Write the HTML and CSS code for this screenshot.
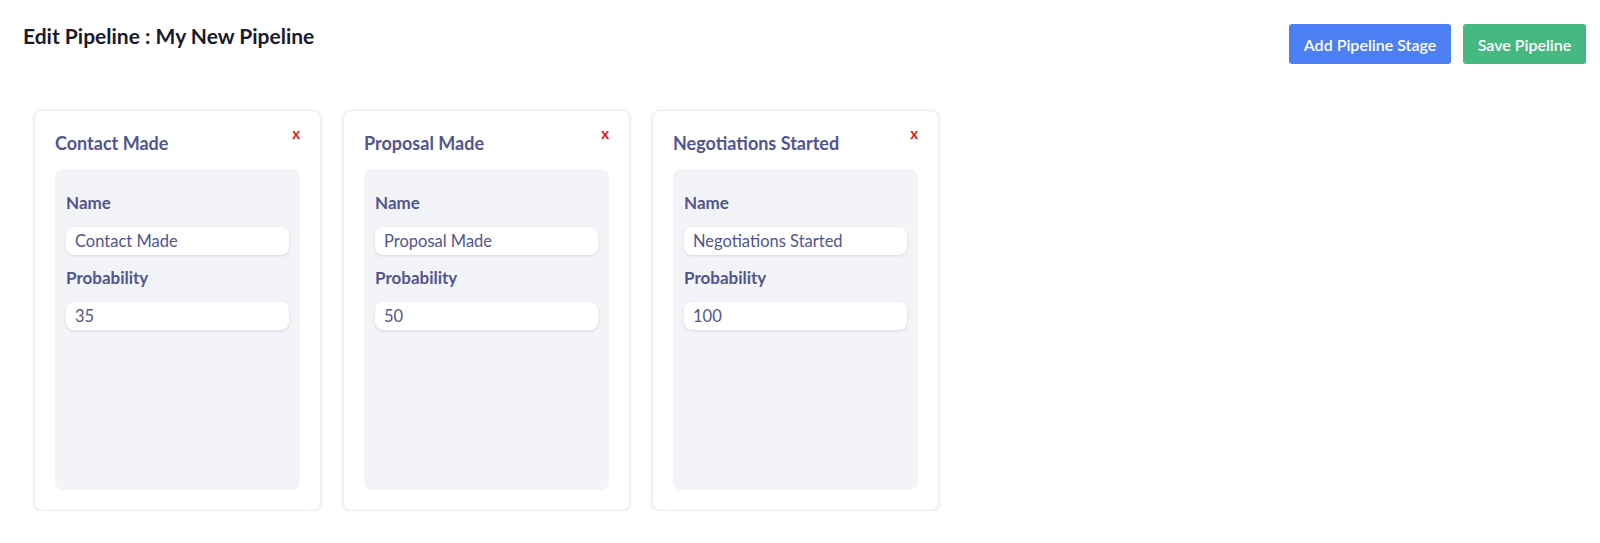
FILE: index.html
```html
<!DOCTYPE html>
<html>
<head>
<meta charset="utf-8">
<link rel="stylesheet" href="styles.css">
</head>
<body>
<header class="topbar">
  <h1 class="page-title">Edit Pipeline : My New Pipeline</h1>
  <div class="actions">
    <button class="btn btn-blue">Add Pipeline Stage</button>
    <button class="btn btn-green">Save Pipeline</button>
  </div>
</header>
<main class="stages">
  <section class="card">
    <div class="card-head">
      <h2 class="card-title">Contact Made</h2>
      <span class="remove">x</span>
    </div>
    <div class="panel">
      <label class="label">Name</label>
      <div class="input">Contact Made</div>
      <label class="label">Probability</label>
      <div class="input">35</div>
    </div>
  </section>
  <section class="card">
    <div class="card-head">
      <h2 class="card-title">Proposal Made</h2>
      <span class="remove">x</span>
    </div>
    <div class="panel">
      <label class="label">Name</label>
      <div class="input">Proposal Made</div>
      <label class="label">Probability</label>
      <div class="input">50</div>
    </div>
  </section>
  <section class="card">
    <div class="card-head">
      <h2 class="card-title">Negotiations Started</h2>
      <span class="remove">x</span>
    </div>
    <div class="panel">
      <label class="label">Name</label>
      <div class="input">Negotiations Started</div>
      <label class="label">Probability</label>
      <div class="input">100</div>
    </div>
  </section>
</main>
</body>
</html>
```
FILE: styles.css
```css
* { box-sizing: border-box; }
body {
  margin: 0;
  background: #ffffff;
  font-family: "Lato", "Open Sans", sans-serif;
  color: #52558f;
}
.topbar {
  display: flex;
  justify-content: space-between;
  align-items: flex-start;
  padding: 24px 14px 0 23px;
}
.page-title {
  margin: 0;
  font-size: 21px;
  line-height: 24px;
  font-weight: 700;
  color: #1a1a2c;
}
.actions {
  display: flex;
  gap: 12px;
}
.btn {
  height: 40px;
  border: none;
  border-radius: 3px;
  color: #ffffff;
  font-family: inherit;
  font-size: 16px;
  font-weight: 600;
  padding: 0 10px;
}
.btn-blue { background: #4d7ff4; width: 162px; }
.btn-green { background: #45b97f; width: 123px; }
.stages {
  display: flex;
  gap: 22px;
  padding: 46px 0 0 34px;
}
.card {
  width: 287px;
  height: 401px;
  border: 1px solid #ececf1;
  border-radius: 8px;
  box-shadow: 0 1px 4px rgba(0,0,0,0.10);
  padding: 18px 20px 20px 20px;
  display: flex;
  flex-direction: column;
  background: #fff;
}
.card-head {
  display: flex;
  justify-content: space-between;
  align-items: flex-start;
  height: 40px;
}
.card-title {
  margin: 3px 0 0 0;
  font-size: 18px;
  line-height: 22px;
  font-weight: 700;
}
.remove {
  color: #ee1111;
  font-size: 15px;
  font-weight: 700;
  line-height: 14px;
  margin-top: -3px;
  margin-right: 0;
}
.panel {
  flex: 1;
  background: #f3f4f8;
  border-radius: 8px;
  padding: 23px 11px 11px 11px;
  display: flex;
  flex-direction: column;
}
.label {
  font-size: 17px;
  font-weight: 700;
  line-height: 22px;
  margin-bottom: 13px;
}
.input {
  height: 28px;
  background: #fff;
  border-radius: 8px;
  box-shadow: 0 1px 3px rgba(0,0,0,0.12);
  padding: 0 9px;
  font-size: 16.5px;
  line-height: 28px;
  margin-bottom: 12px;
}
```
